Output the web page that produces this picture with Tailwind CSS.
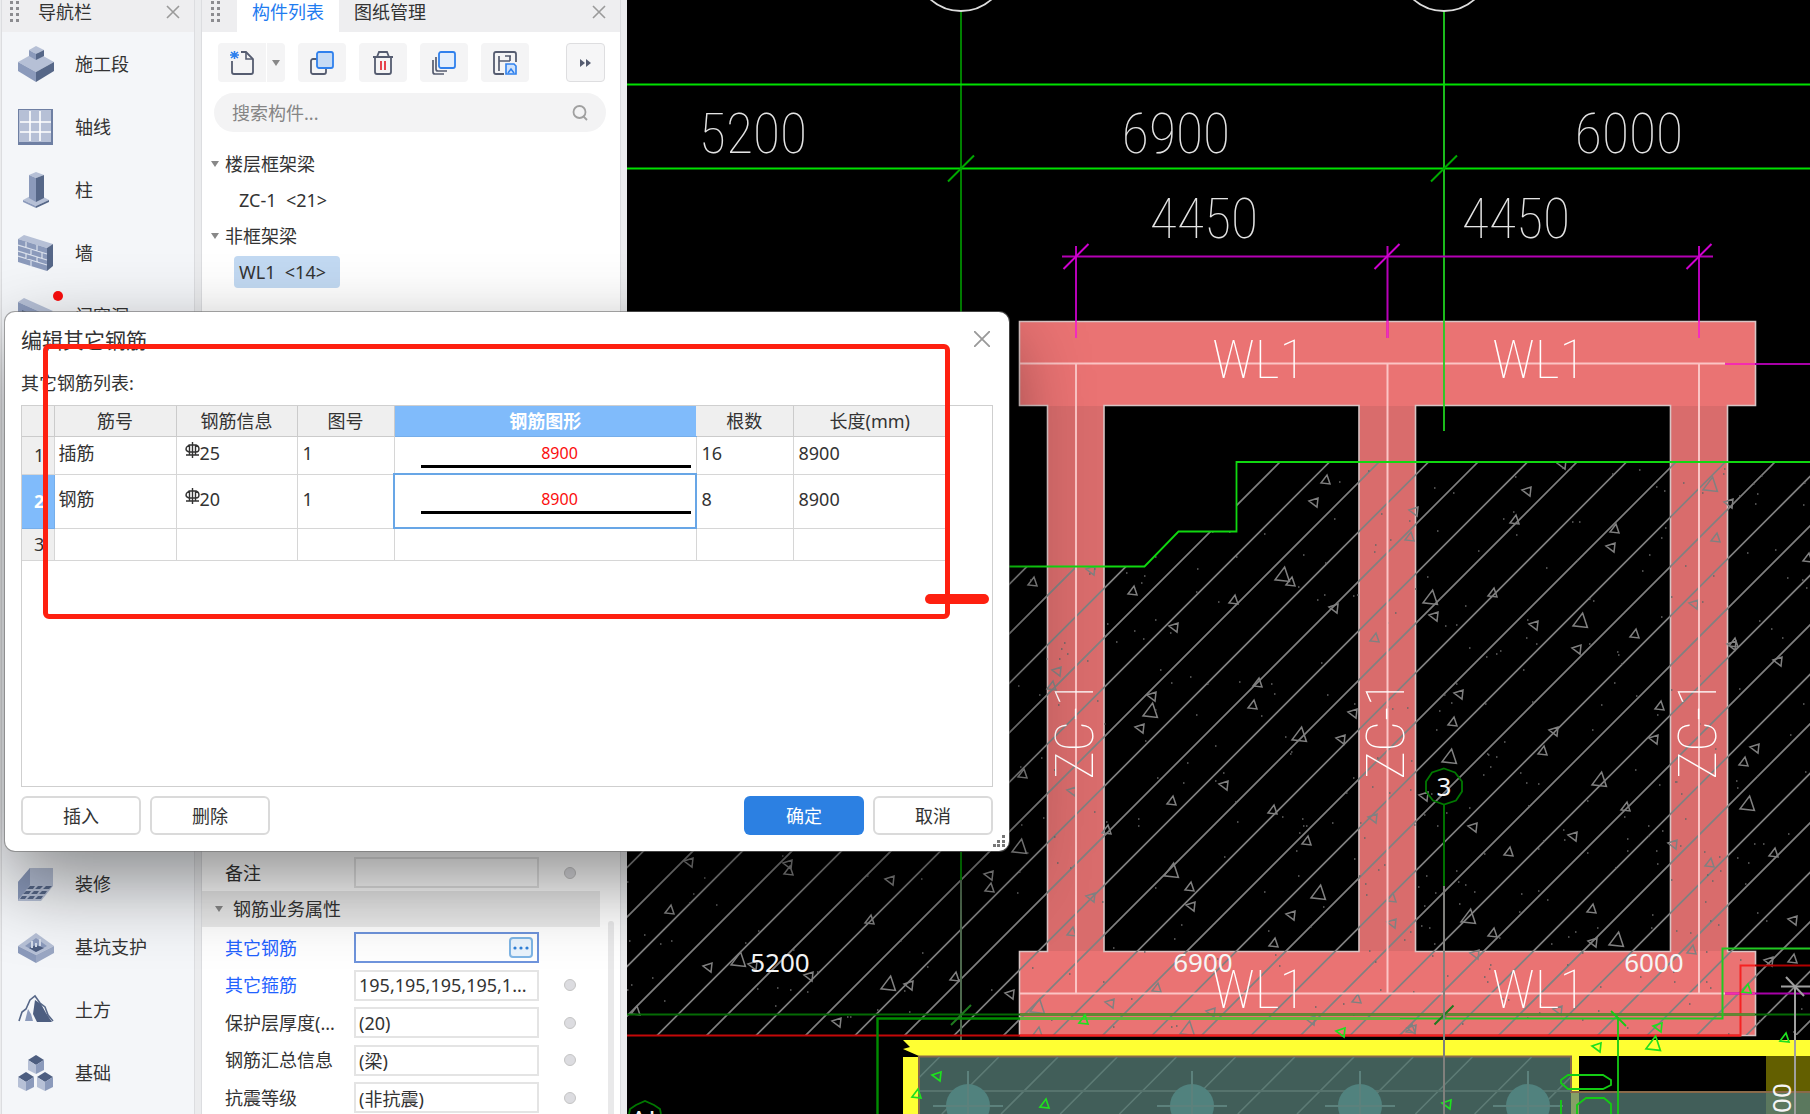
<!DOCTYPE html>
<html lang="zh-CN">
<head>
    <meta charset="UTF-8">
    <meta name="viewport" content="width=device-width, initial-scale=1.0">
    <title>编辑其它钢筋</title>
    <script src="https://cdn.jsdelivr.net/npm/@tailwindcss/browser@4"></script>
    <style>
        body { font-family: 'Noto Sans', 'Noto Sans CJK SC', sans-serif; }
        .cad { font-family: 'Roboto Condensed', 'Liberation Sans Narrow', Roboto, sans-serif; font-weight: 100; }
    </style>
</head>
<body class="relative flex h-screen w-full overflow-hidden bg-[#ebecee] text-lg leading-6 text-[#333]">

    <!-- Navigation -->
    <nav class="ml-px flex w-[194px] shrink-0 flex-col border-x border-[#dcdde0] bg-[#f4f6f9]">
        <header class="flex h-8 shrink-0 items-center bg-[#eeeef0] pr-3.5 pb-2 pl-2">
            <svg class="mr-[18px] h-6 w-2.5" viewBox="0 0 10 24" fill="#8c8c90"><path d="M0 1h3v3H0zM6 1h3v3H6zM0 7h3v3H0zM6 7h3v3H6zM0 13h3v3H0zM6 13h3v3H6zM0 19h3v3H0zM6 19h3v3H6z"/></svg>
            <h2>导航栏</h2>
            <button class="ml-auto" aria-label="关闭导航栏"><svg class="size-3.5" viewBox="0 0 14 14" stroke="#9a9a9a" stroke-width="1.6"><path d="M1 1l12 12M13 1L1 13"/></svg></button>
        </header>
        <ul>
            <li><a href="#" class="flex h-[63px] items-center gap-[21px] pl-4">
                <svg class="size-9" viewBox="0 0 36 36"><path d="M0 16L18 6l18 10-18 10z" fill="#b6c0d6"/><path d="M0 16l18 10v10L0 25z" fill="#8b9abb"/><path d="M36 16L18 26v10l18-11z" fill="#566788"/><path d="M11 4l7-4 8 4-8 4z" fill="#b6c0d6"/><path d="M11 4l7 4v6l-7-4z" fill="#8b9abb"/><path d="M26 4l-8 4v6l8-4z" fill="#566788"/></svg>
                施工段</a></li>
            <li><a href="#" class="flex h-[63px] items-center gap-[21px] pl-4">
                <svg class="size-9" viewBox="0 0 36 36"><path d="M0 0h35v36H0z" fill="#6e7fa3"/><path d="M1 1h32v32H1z" fill="#b6c0d6"/><path d="M2 13h31M2 23h31M12 2v30M22 2v30" stroke="#fff" stroke-width="1.6"/></svg>
                轴线</a></li>
            <li><a href="#" class="flex h-[63px] items-center gap-[21px] pl-4">
                <svg class="size-9" viewBox="0 0 36 36"><path d="M5 28l13-7 13 7-13 6z" fill="#b6c0d6"/><path d="M5 28l13 6v2L5 30z" fill="#8b9abb"/><path d="M31 28l-13 6v2l13-6z" fill="#566788"/><path d="M11 3l7-3 8 3-8 3z" fill="#b6c0d6"/><path d="M11 3l7 3v24l-7-4z" fill="#8b9abb"/><path d="M26 3l-8 3v24l8-4z" fill="#566788"/></svg>
                柱</a></li>
            <li><a href="#" class="flex h-[63px] items-center gap-[21px] pl-4">
                <svg class="size-9" viewBox="0 0 36 36"><path d="M0 4l6-4 29 9-6 4z" fill="#b6c0d6"/><path d="M0 4l29 9v23L0 27z" fill="#8b9abb"/><path d="M35 9l-6 4v23l6-5z" fill="#566788"/><path d="M0 10l29 9M0 16l29 9M0 21l29 9M8 7v5M19 10v6M13 14v6M24 17v6M8 18v6M19 22v6M13 25v6" stroke="#dbe1ec" stroke-width="1.2" fill="none"/></svg>
                墙</a></li>
            <li><a href="#" class="relative flex h-[63px] items-center gap-[21px] pl-4">
                <svg class="size-9" viewBox="0 0 36 36"><path d="M0 4l6-4 29 13-6 4z" fill="#b6c0d6"/><path d="M0 4l29 13v19L0 27z" fill="#8b9abb"/><path d="M4 12l9 4v12l-9-3z" fill="#566788"/></svg>
                门窗洞
                <span class="absolute top-[7px] left-[51px] size-2.5 rounded-full bg-[#fb0d0d]"></span></a></li>
        </ul>
        <ul class="mt-auto pb-2.5">
            <li><a href="#" class="flex h-[63px] items-center gap-[21px] pl-4">
                <svg class="size-9" viewBox="0 0 36 36"><path d="M12 2h23v18L23 35H0V16z" fill="#b6c0d6"/><path d="M12 2v17L0 34V16z" fill="#8b9abb"/><path d="M12 20h5l-2 3h-6zM20 20h5l-3 3h-5zM28 20h6l-3 3h-6zM8 25h5l-2 3H5zM16 25h5l-2 3h-6zM24 25h5l-2 3h-6zM4 30h5l-2 3H2zM12 30h5l-2 3h-6zM20 30h5l-2 3h-6z" fill="#566788"/></svg>
                装修</a></li>
            <li><a href="#" class="flex h-[63px] items-center gap-[21px] pl-4">
                <svg class="size-9" viewBox="0 0 36 36"><path d="M0 17L18 4l18 13-18 9z" fill="#b6c0d6"/><path d="M0 17l18 9v8L0 24z" fill="#8b9abb"/><path d="M36 17l-18 9v8l18-10z" fill="#9aa7c4"/><path d="M7 17l11-8 11 8-11 6z" fill="#8b9abb"/><path d="M11 19l7-3 8 3-8 4z" fill="#4d5e80"/><path d="M14 12v7M22 10v7M18 14v4" stroke="#d3dae8" stroke-width="2"/></svg>
                基坑支护</a></li>
            <li><a href="#" class="flex h-[63px] items-center gap-[21px] pl-4">
                <svg class="size-9" viewBox="0 0 36 36"><path d="M1 29l3-9 4-3 4-9 5-4 5 7 5 4 3 8 5 6" fill="none" stroke="#566788" stroke-width="1.6"/><path d="M17 8l6 4 5 9 6 9H19l-4-8z" fill="#4d5e80"/><path d="M10 17l-3 12h8l-2-7z" fill="#8b9abb"/></svg>
                土方</a></li>
            <li><a href="#" class="flex h-[63px] items-center gap-[21px] pl-4">
                <svg class="size-9" viewBox="0 0 36 36"><g id="cube"><path d="M10 5l8-5 8 5-8 5z" fill="#4d5e80"/><path d="M10 5l8 5v9l-8-4z" fill="#b6c0d6"/><path d="M26 5l-8 5v9l8-4z" fill="#8b9abb"/></g><use href="#cube" x="-10" y="17"/><use href="#cube" x="9" y="17"/></svg>
                基础</a></li>
        </ul>
    </nav>

    <!-- Component list and properties -->
    <section class="ml-1.5 flex w-[420px] shrink-0 flex-col border-x border-[#dcdde0] bg-white">
        <header class="flex h-8 shrink-0 items-start bg-[#eeeef0] pr-3.5 pl-[9px]">
            <svg class="mr-4 h-6 w-2.5" viewBox="0 0 10 24" fill="#8c8c90"><path d="M0 1h3v3H0zM6 1h3v3H6zM0 7h3v3H0zM6 7h3v3H6zM0 13h3v3H0zM6 13h3v3H6zM0 19h3v3H0zM6 19h3v3H6z"/></svg>
            <button class="h-8 bg-white px-[15px] pb-2 text-[#1f7cf0]">构件列表</button>
            <button class="h-8 px-[15px] pb-2">图纸管理</button>
            <button class="ml-auto h-6" aria-label="关闭"><svg class="size-3.5" viewBox="0 0 14 14" stroke="#9a9a9a" stroke-width="1.6"><path d="M1 1l12 12M13 1L1 13"/></svg></button>
        </header>

        <div class="mt-[11px] flex h-[39px] gap-[13px] pr-[15px] pl-4">
            <div class="flex gap-px">
                <button class="flex w-12 items-center justify-center rounded-l bg-[#f4f4f5]" aria-label="新建"><svg class="size-6" viewBox="0 0 24 24" fill="none"><path d="M2 10v11q0 2 2 2h17q2 0 2-2V8l-7-7h-5" stroke="#555c70" stroke-width="1.8"/><path d="M16 1v7h7" stroke="#555c70" stroke-width="1.6"/><path d="M1 1l7 6M8 1L1 7M4.500 0v8M0 4h9" stroke="#2f80ed" stroke-width="1.6"/></svg></button>
                <button class="flex w-[18px] items-center justify-center rounded-r bg-[#f4f4f5]" aria-label="新建选项"><svg class="h-1.5 w-2" viewBox="0 0 8 6"><path d="M0 0h8L4 6z" fill="#888"/></svg></button>
            </div>
            <button class="flex w-12 items-center justify-center rounded bg-[#f4f4f5]" aria-label="复制"><svg class="size-6" viewBox="0 0 24 24" fill="none"><rect x="1" y="8" width="15" height="15" rx="2" stroke="#555c70" stroke-width="1.8"/><rect x="7" y="1" width="16" height="16" rx="2" fill="#c6dbf5" stroke="#2f80ed" stroke-width="1.8"/></svg></button>
            <button class="flex w-12 items-center justify-center rounded bg-[#f4f4f5]" aria-label="删除"><svg class="size-6" viewBox="0 0 24 24" fill="none" stroke="#555c70" stroke-width="1.8"><path d="M2 6h20M6 6l2-5h8l2 5M4 6v15q0 2 2 2h12q2 0 2-2V6"/><path d="M10 10v9M14 10v9" stroke="#e5303a"/></svg></button>
            <button class="flex w-12 items-center justify-center rounded bg-[#f4f4f5]" aria-label="层间复制"><svg class="size-6" viewBox="0 0 24 24" fill="none"><path d="M1 9v12q0 2 2 2h9M4 6v12q0 2 2 2h9" stroke="#555c70" stroke-width="1.7"/><rect x="7" y="1" width="16" height="16" rx="2" fill="#e3eefc" stroke="#2f80ed" stroke-width="1.8"/></svg></button>
            <button class="flex w-12 items-center justify-center rounded bg-[#f4f4f5]" aria-label="存档"><svg class="size-6" viewBox="0 0 24 24" fill="none"><path d="M11 23H3q-2 0-2-2V3q0-2 2-2h18q2 0 2 2v8" stroke="#555c70" stroke-width="1.8"/><path d="M6 5v15M6 10h11M17 5v5M12 5h6" stroke="#555c70" stroke-width="1.7"/><path d="M13 13h8l2 2v8H13z" fill="#cfe2fb" stroke="#2f80ed" stroke-width="1.6"/><path d="M15 22l3-4 3 4" stroke="#2f80ed" stroke-width="1.6"/></svg></button>
            <button class="ml-auto flex w-[39px] items-center justify-center rounded border border-[#dedee0] bg-[#f6f6f7]" aria-label="更多"><svg class="h-2 w-3" viewBox="0 0 12 8" fill="#555c70"><path d="M0 0l5 4-5 4zM6 0l5 4-5 4z"/></svg></button>
        </div>

        <div class="mt-[11px] mr-3.5 ml-3 flex h-[39px] items-center rounded-full bg-[#f3f3f4] pr-[18px] pl-[18px]">
            <input type="search" aria-label="搜索构件" placeholder="搜索构件..." class="min-w-0 flex-1 bg-transparent outline-none placeholder:text-[#858585]">
            <svg class="size-4" viewBox="0 0 16 16" fill="none" stroke="#a0a0a0" stroke-width="1.8"><circle cx="7.500" cy="7" r="6"/><path d="M11 11l4 4"/></svg>
        </div>

        <ul class="mt-3.5">
            <li>
                <div class="flex h-9 items-center gap-1.5 pl-[9px]"><svg class="h-1.5 w-2" viewBox="0 0 8 6"><path d="M0 0h8L4 6z" fill="#888"/></svg>楼层框架梁</div>
                <div class="flex h-9 items-center pl-8"><span class="px-[5px] whitespace-pre">ZC-1  &lt;21&gt;</span></div>
            </li>
            <li>
                <div class="flex h-9 items-center gap-1.5 pl-[9px]"><svg class="h-1.5 w-2" viewBox="0 0 8 6"><path d="M0 0h8L4 6z" fill="#888"/></svg>非框架梁</div>
                <div class="flex h-9 items-center pl-8"><span class="rounded bg-[#c2d9f2] py-1 pr-3.5 pl-[5px] whitespace-pre">WL1  &lt;14&gt;</span></div>
            </li>
        </ul>

        <div class="relative mt-auto pb-px">
            <div class="flex h-[31px] items-center pl-[23px]">
                <label for="remark" class="w-[129px]">备注</label>
                <input id="remark" class="h-full w-[185px] border-2 border-[#e4e4e4] bg-white px-1">
                <span class="ml-[25px] size-3 rounded-full border border-[#c4c4c4] bg-[#dcdce0]"></span>
            </div>
            <h3 class="mt-[3px] mr-5 mb-[5px] flex h-9 items-center gap-2.5 bg-[#eaeaea] pl-[13px]"><svg class="h-1.5 w-2" viewBox="0 0 8 6"><path d="M0 0h8L4 6z" fill="#888"/></svg>钢筋业务属性</h3>
            <div class="flex h-[181px] flex-col justify-between">
                <div class="flex h-[31px] items-center pl-[23px]">
                    <label for="other-rebar" class="w-[129px] text-[#1f62ff]">其它钢筋</label>
                    <div class="flex h-full w-[185px] items-center border-2 border-[#6f94dc] bg-white pr-1">
                        <input id="other-rebar" class="min-w-0 flex-1 outline-none">
                        <button class="flex h-[21px] w-6 items-center justify-center rounded border-2 border-[#7fb6e6] bg-[#eaf4fd]" aria-label="编辑其它钢筋"><svg class="h-1 w-4" viewBox="0 0 16 4" fill="#2f80d8"><circle cx="2" cy="2" r="1.600"/><circle cx="8" cy="2" r="1.600"/><circle cx="14" cy="2" r="1.600"/></svg></button>
                    </div>
                </div>
                <div class="flex h-[31px] items-center pl-[23px]">
                    <label for="stirrup" class="w-[129px] text-[#1f62ff]">其它箍筋</label>
                    <input id="stirrup" value="195,195,195,195,1..." class="h-full w-[185px] border-2 border-[#e4e4e4] bg-white px-[3px]">
                    <span class="ml-[25px] size-3 rounded-full border border-[#c4c4c4] bg-[#dcdce0]"></span>
                </div>
                <div class="flex h-[31px] items-center pl-[23px]">
                    <label for="cover" class="w-[129px]">保护层厚度(...</label>
                    <input id="cover" value="(20)" class="h-full w-[185px] border-2 border-[#e4e4e4] bg-white px-[3px]">
                    <span class="ml-[25px] size-3 rounded-full border border-[#c4c4c4] bg-[#dcdce0]"></span>
                </div>
                <div class="flex h-[31px] items-center pl-[23px]">
                    <label for="summary" class="w-[129px]">钢筋汇总信息</label>
                    <input id="summary" value="(梁)" class="h-full w-[185px] border-2 border-[#e4e4e4] bg-white px-[3px]">
                    <span class="ml-[25px] size-3 rounded-full border border-[#c4c4c4] bg-[#dcdce0]"></span>
                </div>
                <div class="flex h-[31px] items-center pl-[23px]">
                    <label for="seismic" class="w-[129px]">抗震等级</label>
                    <input id="seismic" value="(非抗震)" class="h-full w-[185px] border-2 border-[#e4e4e4] bg-white px-[3px]">
                    <span class="ml-[25px] size-3 rounded-full border border-[#c4c4c4] bg-[#dcdce0]"></span>
                </div>
            </div>
            <div class="absolute top-16 right-1.5 bottom-0 w-1.5 rounded-t bg-[#e9e9ea]"></div>
        </div>
    </section>

    <!-- Drawing -->
    <main class="ml-1.5 min-w-0 flex-1 bg-black">
        <svg class="block h-full w-full" viewBox="627 0 1183 1114" preserveAspectRatio="xMinYMin slice" fill="none">
            <defs>
                <clipPath id="concrete"><path d="M627 566H1145L1178 531H1236V462H1810V1035H627z"/></clipPath>
                <clipPath id="slab"><path d="M919 1057H1571V1114H919z"/></clipPath>
            </defs>

            <!-- beams and columns -->
            <path d="M1047 405h57v547h-57zM1359 405h57v547h-57zM1670 405h57v547h-57z" fill="#d96c6c"/>
            <path d="M1020 321h735v85h-735zM1020 951h735v85h-735z" fill="#ea7373"/>
            <path d="M1047.500 951.500h-28v84h736v-84h-28v-546h28v-84h-736v84h28zM1104 405.500h255v546h-255zM1415.500 405.500h255v546h-255z" stroke="#d8c4c4" stroke-width="1.6"/>

            <!-- hatching -->
            <g clip-path="url(#concrete)">
                <path id="hatch" stroke="#808080" stroke-width="1.7"/>
                <path id="stones" stroke="#808080" stroke-width="1.5"/>
                <path id="dots" stroke="#666" stroke-width="1.5"/>
            </g>
            <path d="M1020 363.500h705M1076 363v631M1387.500 363v631M1699 363v631M1020 993.500h705" stroke="#fbc4c4" stroke-width="2"/>
            <path d="M1000 566.500H1144.500L1178.500 531.500H1236.500V462H1810" stroke="#10d810" stroke-width="1.8"/>

            <!-- axes -->
            <path d="M961 11V312M961 852v28" stroke="#008000" stroke-width="2"/>
            <path d="M961 880v234" stroke="#4e694e" stroke-width="2"/>
            <path d="M1444 11V431" stroke="#1fd01f" stroke-width="1.8"/>
            <path d="M627 84.500H1810M627 168.500H1810" stroke="#00e000" stroke-width="1.8"/>
            <path d="M948 181.500l26-26M1431 181.500l26-26" stroke="#00a800" stroke-width="2"/>
            <circle cx="961" cy="-35" r="46" stroke="#ddd" stroke-width="1.8"/>
            <circle cx="1444" cy="-35" r="46" stroke="#ddd" stroke-width="1.8"/>
            <path d="M1062 256.500H1713" stroke="#b400b4" stroke-width="2"/>
            <path d="M1076 246v92M1387.500 246v92M1699 246v92" stroke="#b800b8" stroke-width="2"/>
            <path d="M1076 321v17M1387.500 321v17M1699 321v17" stroke="#f52cc0" stroke-width="2"/>
            <path d="M1063.500 269l25-25M1374.500 269l25-25M1686.500 269l25-25" stroke="#d000d0" stroke-width="2"/>
            <path d="M1725 364h85M1725 993.500h85" stroke="#a800a8" stroke-width="2"/>
            <path d="M1725 364h30M1725 993.500h30" stroke="#f52cb0" stroke-width="2"/>

            <!-- lower section -->
            <path d="M919 1057H1571V1092H1810V1114H919z" fill="#415e59"/>
            <path d="M1766 1056h44v36h-44z" fill="#635f00"/><path d="M1766 1092h44v22h-44z" fill="#5b785e"/>
            <path d="M903 1040H1810V1056H1579V1114H1571V1056H919L903 1049l7-2zM903 1057h16v57h-16z" fill="#ffff33"/>
            <path d="M1571 1092h8v22h-8z" fill="#86a066"/>
            <path d="M919 1114V1056.500H1571V1092H1810" stroke="#8a6a4a" stroke-width="2"/>
            <path id="slab-hatch" clip-path="url(#slab)" stroke="#5d7b75" stroke-width="1.6"/>
            <path d="M919 1091h652" stroke="#56736d" stroke-width="2"/>
            <g fill="#51827e"><circle cx="968" cy="1106" r="22"/><circle cx="1192" cy="1106" r="22"/><circle cx="1360" cy="1106" r="22"/><circle cx="1528" cy="1106" r="22"/></g>
            <path d="M933 1106h70M968 1071v43M1157 1106h70M1192 1071v43M1325 1106h70M1360 1071v43M1493 1106h70M1528 1071v43" stroke="#5c817c" stroke-width="2"/>
            <path d="M627 1035.500H1740.500" stroke="#c40808" stroke-width="2"/>
            <path d="M1020 1035.500H1740.500V965.500H1755" stroke="#f52222" stroke-width="2"/>
            <path d="M1755 965.500h55" stroke="#b00000" stroke-width="2"/>
            <path d="M627 1014.500H1810" stroke="#056b05" stroke-width="1.8"/>
            <path d="M877.500 1114V1018.500H1020" stroke="#008c00" stroke-width="2.4"/>
            <path d="M1020 1018.500H1400" stroke="#62b53a" stroke-width="3"/>
            <path d="M1020 1014.500H1755" stroke="#5f8a34" stroke-width="2.4"/>
            <path d="M1400 1018.500H1722.500V948.500H1810" stroke="#22c822" stroke-width="2"/>
            <path d="M951 1025l20-20M1434.500 1024.500l19-19" stroke="#1f7a1f" stroke-width="2"/>
            <path d="M1618 1017v97M1611 1011l15 15" stroke="#14cc14" stroke-width="1.8"/>
            <path d="M1568 1075h35l8 5v5l-8 4h-35l-7-6v-3zM1577 1114v-9l9-7h18l7 6v10M1561 1100v14" stroke="#14cc14" stroke-width="1.8"/>
            <path id="green-stones" stroke="#1fe01f" stroke-width="1.7"/>

            <path d="M1444 804v82" stroke="#007000" stroke-width="2"/>
            <path d="M1444 886v228" stroke="#80807c" stroke-width="2"/>
            <path d="M1444 768.500l11 4 7 9v10l-6 9-12 4-11-4-7-9v-10l6-9z" stroke="#007800" stroke-width="1.8"/>
            <path d="M629 1114l1-5 6-4 9-4 9 4 6 4 1 5" stroke="#007800" stroke-width="1.8"/>
            <path d="M1781 986.500h29M1795 987v127" stroke="#a0a0a0" stroke-width="2"/>
            <path d="M1786 977l18 19" stroke="#a0a0a0" stroke-width="2"/>

            <!-- dimensions and member names -->
            <g class="cad text-[56px]" fill="#e4e4e4" text-anchor="middle">
                <text x="753" y="153">5200</text>
                <text x="1176" y="153">6900</text>
                <text x="1629" y="153">6000</text>
                <text x="1204" y="238">4450</text>
                <text x="1516" y="238">4450</text>
            </g>
            <g class="cad text-[54px]" fill="#fff" text-anchor="middle">
                <text x="1259" y="378">WL1</text>
                <text x="1539" y="378">WL1</text>
                <text x="1259" y="1008">WL1</text>
                <text x="1539" y="1008">WL1</text>
                <text transform="translate(1093 730) rotate(-90)">ZC-1</text>
                <text transform="translate(1404 730) rotate(-90)">ZC-1</text>
                <text transform="translate(1716 730) rotate(-90)">ZC-1</text>
            </g>
            <g class="text-[26px]" fill="#f5f5f5" text-anchor="middle">
                <text x="780" y="972">5200</text>
                <text x="1203" y="972">6900</text>
                <text x="1654" y="972">6000</text>
                <text x="1444" y="796">3</text>
                <text x="643" y="1129">AJ</text>
                <text transform="translate(1791 1098) rotate(-90)">00</text>
            </g>
        </svg>
    </main>

    <!-- Edit dialog -->
    <div role="dialog" aria-labelledby="dialog-title" class="absolute top-[312px] left-[5px] w-[1004px] rounded-[10px] bg-white px-4 pb-4 shadow-[0_0_0_1px_rgba(110,110,110,0.6),0_30px_80px_rgba(0,0,0,0.45)]">
        <div class="flex h-14 items-center justify-between pr-[3px]">
            <h1 id="dialog-title" class="text-[21px]">编辑其它钢筋</h1>
            <button class="pb-0.5" aria-label="关闭"><svg class="size-4" viewBox="0 0 16 16" stroke="#999" stroke-width="1.8"><path d="M0 0l16 16M16 0L0 16"/></svg></button>
        </div>
        <p class="h-[37px] pt-[3px]">其它钢筋列表:</p>
        <div class="h-[382px] overflow-hidden border border-[#cfcfcf]">
            <table class="w-[924px] table-fixed border-collapse text-left">
                <colgroup>
                    <col class="w-[32px]"><col class="w-[122px]"><col class="w-[121px]"><col class="w-[97px]"><col class="w-[302px]"><col class="w-[97px]"><col class="w-[153px]">
                </colgroup>
                <thead>
                    <tr class="h-[30px] bg-[#efefef] text-center">
                        <th class="border-r border-b border-[#cbcbcb]"></th>
                        <th class="border-r border-b border-[#cbcbcb] font-normal">筋号</th>
                        <th class="border-r border-b border-[#cbcbcb] font-normal">钢筋信息</th>
                        <th class="border-r border-b border-[#cbcbcb] font-normal">图号</th>
                        <th class="border-b border-[#76aeea] bg-[#80bbfb] font-semibold text-white">钢筋图形</th>
                        <th class="border-r border-b border-[#cbcbcb] font-normal">根数</th>
                        <th class="border-b border-[#cbcbcb] font-normal">长度(mm)</th>
                    </tr>
                </thead>
                <tbody>
                    <tr class="h-[38px]">
                        <th class="border-r border-b border-[#d6d6d6] bg-[#efefef] pl-3 font-normal">1</th>
                        <td class="border-r border-b border-[#d6d6d6] pb-1 pl-1">插筋</td>
                        <td class="border-r border-b border-[#d6d6d6] pb-1 pl-2"><span class="flex items-center"><svg class="mb-1.5 h-4 w-[15px]" viewBox="0 0 15 16" fill="none" stroke="#333" stroke-width="1.4"><path d="M7.500 0v16M1 13h13"/><path d="M4 3h7q3 1 3 4t-3 3H4q-3-1-3-3t3-4zM4.500 3v10M10.500 3v10"/></svg>25</span></td>
                        <td class="border-r border-b border-[#d6d6d6] pb-1 pl-[5px]">1</td>
                        <td class="border-r border-b border-[#d6d6d6] p-0 align-top text-center text-base leading-6 text-[#fb0d0d]"><div class="mt-1 mr-[5px] ml-[26px] border-b-3 border-black pl-2">8900</div></td>
                        <td class="border-r border-b border-[#d6d6d6] pb-1 pl-[5px]">16</td>
                        <td class="border-b border-[#d6d6d6] pb-1 pl-[5px]">8900</td>
                    </tr>
                    <tr class="h-[54px]">
                        <th class="border-r border-b border-[#76aeea] bg-[#80bbfb] pl-3 font-bold text-white">2</th>
                        <td class="border-r border-b border-[#d6d6d6] pb-1 pl-1">钢筋</td>
                        <td class="border-r border-b border-[#d6d6d6] pb-1 pl-2"><span class="flex items-center"><svg class="mb-1.5 h-4 w-[15px]" viewBox="0 0 15 16" fill="none" stroke="#333" stroke-width="1.4"><path d="M7.500 0v16M1 13h13"/><path d="M4 3h7q3 1 3 4t-3 3H4q-3-1-3-3t3-4zM4.500 3v10M10.500 3v10"/></svg>20</span></td>
                        <td class="border-r border-b border-[#d6d6d6] pb-1 pl-[5px]">1</td>
                        <td class="border-r border-b border-[#d6d6d6] p-0 align-top text-center text-base leading-6 text-[#fb0d0d] outline-2 -outline-offset-1 outline-[#68a6e6]"><div class="mt-3 mr-[5px] ml-[26px] border-b-3 border-black pl-2">8900</div></td>
                        <td class="border-r border-b border-[#d6d6d6] pb-1 pl-[5px]">8</td>
                        <td class="border-b border-[#d6d6d6] pb-1 pl-[5px]">8900</td>
                    </tr>
                    <tr class="h-8">
                        <th class="border-r border-b border-[#d6d6d6] bg-[#efefef] pl-3 font-normal">3</th>
                        <td class="border-r border-b border-[#d6d6d6]"></td>
                        <td class="border-r border-b border-[#d6d6d6]"></td>
                        <td class="border-r border-b border-[#d6d6d6]"></td>
                        <td class="border-r border-b border-[#d6d6d6]"></td>
                        <td class="border-r border-b border-[#d6d6d6]"></td>
                        <td class="border-b border-[#d6d6d6]"></td>
                    </tr>
                </tbody>
            </table>
        </div>
        <div class="mt-[9px] flex gap-[9px]">
            <button class="h-[39px] w-[120px] rounded-md border-2 border-[#dadada] bg-white">插入</button>
            <button class="h-[39px] w-[120px] rounded-md border-2 border-[#dadada] bg-white">删除</button>
            <button class="ml-auto h-[39px] w-[120px] rounded-md bg-[#2c80e2] text-white">确定</button>
            <button class="h-[39px] w-[120px] rounded-md border-2 border-[#dadada] bg-white">取消</button>
        </div>
        <svg class="absolute right-1 bottom-1 size-3" viewBox="0 0 12 12" fill="#777"><path d="M9 0h3v3H9zM9 5h3v3H9zM4 5h3v3H4zM9 9h3v3H9zM4 9h3v3H4zM0 9h3v3H0z"/></svg>

        <!-- markup -->
        <div class="pointer-events-none absolute top-8 left-[38px] h-[275px] w-[907px] rounded-md border-5 border-[#fe2010]"></div>
        <div class="pointer-events-none absolute top-[282px] left-[920px] h-2.5 w-16 rounded-full bg-[#fe2010]"></div>
    </div>

    <script>
        // [x, y, big]
        const stones = [
            [1033,582],[1091,570],[1133,591],[1174,627],[1234,600],[1283,575,1],[1291,582],[1314,502],[1326,480],[1334,608],[1375,638],[1414,511],[1410,537],[1057,671],[1052,686],[1152,696],[1258,683],
            [1527,491],[1515,520],[1562,464],[1615,529],[1611,547],[1711,485,1],[1729,503],[1716,538],[1694,604],[1431,598,1],[1434,616],[1493,593],[1534,625],[1581,621,1],[1577,649],[1635,634],[1732,645],[1734,643],[1778,661],[1808,558],
            [1459,694],[1453,722],[1450,757,1],[1543,751],[1554,731],[1660,706],[1654,739],[1600,780,1],[1755,748],[1744,762],[1424,796],
            [1151,711,1],[1140,728],[1253,705],[1353,713],[1300,735,1],[1341,739],[1023,774],[1072,791],[1172,801],[1224,785],[1273,810],[1373,818],[1107,830],[1020,847,1],[1307,841],[1172,871,1],[1190,887],[1191,906],[1319,893,1],[1091,897],[1072,932],[1291,915],[1392,898],[1392,923],[1274,943],
            [1010,994],[1038,1007,1],[1110,1003],[1157,988],[1211,1012],[1357,999],[1311,1020],[1188,1029,1],[1412,1029],[1038,1032],
            [1473,827],[1509,852],[1573,836],[1626,807],[1673,844],[1710,863],[1748,804,1],[1774,853],[1793,920],[1592,909],[1593,942],[1617,940,1],[1469,917,1],[1493,933],[1475,954],[1692,950],[1769,961],[1793,959],[1558,1010],[1411,1029],
            [689,862],[670,910],[788,864],[789,871],[890,880],[870,920],[989,875],[990,888],[708,967],[739,960,1],[809,976],[889,984,1],[909,985],[955,977],[837,1022],[636,1011],[753,965]
        ];
        const greenStones = [[1747,989],[1597,1047],[1654,1044,1],[1658,1027],[1785,1038],[1447,1104],[1084,1020],[1341,1032],[1045,1104],[937,1076],[917,1094]];

        function triangles(list) {
            return list.map(([x, y, big], i) => {
                const s = big ? 1.6 : 1;
                const shape = i % 2 && !big ? [[-5, -1], [4, -4], [3, 5]] : [[1, -5], [4, 4], [-5, 3]];
                return 'M' + shape.map(([a, b]) => `${x + a * s} ${y + b * s}`).join('L') + 'z';
            }).join('');
        }

        function diagonals(first, step, count, top, bottom) {
            let d = '';
            for (let i = 0; i < count; i++) {
                const sum = first + i * step;
                d += `M${sum - top} ${top}L${sum - bottom} ${bottom}`;
            }
            return d;
        }

        function specks(count) {
            let seed = 7, d = '';
            const next = () => (seed = (seed * 16807) % 2147483647) / 2147483647;
            for (let i = 0; i < count; i++) {
                d += `M${Math.round(627 + next() * 1183)} ${Math.round(462 + next() * 573)}h1.500`;
            }
            return d;
        }

        const draw = (id, d) => document.getElementById(id).setAttribute('d', d);
        draw('hatch', diagonals(1742 - 49.5 * 12, 49.5, 36, 462, 1036));
        draw('slab-hatch', diagonals(2115 - 59.2 * 3, 59.2, 14, 1057, 1114));
        draw('stones', triangles(stones));
        draw('green-stones', triangles(greenStones));
        draw('dots', specks(520));
    </script>
</body>
</html>
